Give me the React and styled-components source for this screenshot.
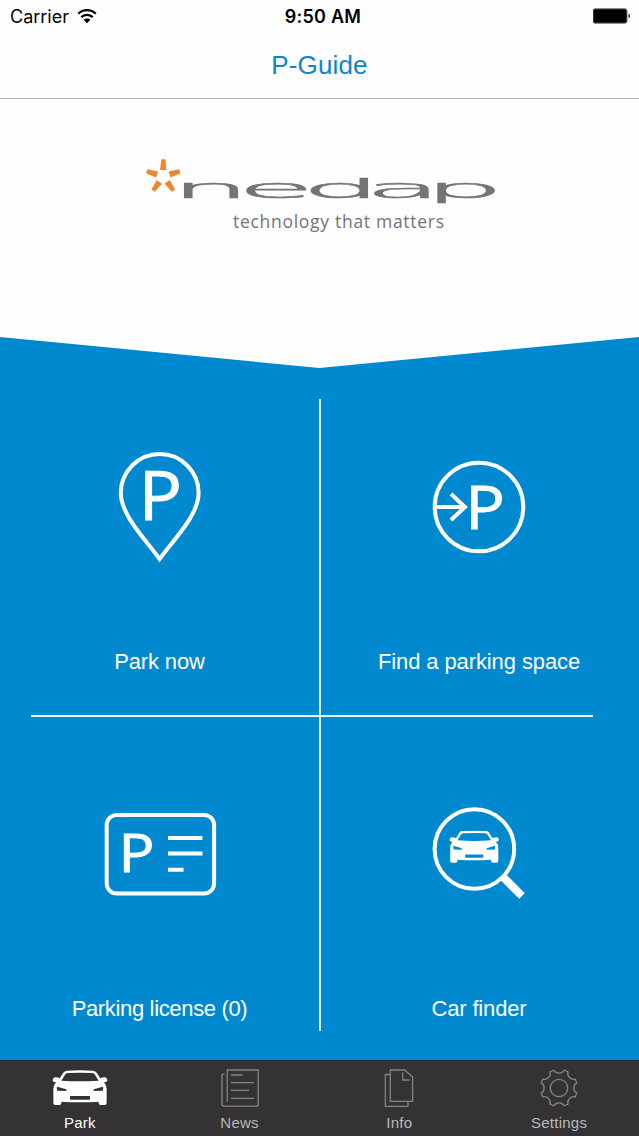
import styled, { createGlobalStyle } from "styled-components";

const tiles = [
  { id: "park", label: "Park now", Icon: PinIcon, spacing: -0.15 },
  { id: "find", label: "Find a parking space", Icon: FindIcon, spacing: -0.1 },
  { id: "license", label: "Parking license (0)", Icon: LicenseIcon, spacing: -0.34 },
  { id: "car", label: "Car finder", Icon: CarFinderIcon, spacing: -0.18 },
];

const tabs = [
  { id: "park", label: "Park", Icon: CarIcon },
  { id: "news", label: "News", Icon: NewsIcon },
  { id: "info", label: "Info", Icon: InfoIcon },
  { id: "settings", label: "Settings", Icon: GearIcon },
];

export default function App() {
  return (
    <>
      <GlobalStyle />
      <Screen>
        <StatusBar>
          <Carrier>
            Carrier
            <WifiIcon />
          </Carrier>
          <Clock>9:50 AM</Clock>
          <BatterySlot>
            <BatteryIcon />
          </BatterySlot>
        </StatusBar>
        <NavBar>
          <h1>P-Guide</h1>
        </NavBar>

        <Main>
          <Hero>
            <Logo />
          </Hero>
          <TileGrid>
            {tiles.slice(0, 2).map((tile, i) => (
              <Tile key={tile.id} tile={tile} column={i === 0 ? 1 : 3} row={1} />
            ))}
            <HorizontalLine />
            <VerticalLine />
            {tiles.slice(2).map((tile, i) => (
              <Tile key={tile.id} tile={tile} column={i === 0 ? 1 : 3} row={3} />
            ))}
          </TileGrid>
        </Main>

        <TabBar>
          {tabs.map(({ id, label, Icon }) => (
            <Tab key={id} $active={id === "park"}>
              <TabIcon>
                <Icon />
              </TabIcon>
              <span>{label}</span>
            </Tab>
          ))}
        </TabBar>
      </Screen>
    </>
  );
}

function Tile({ tile, column, row }) {
  const { label, Icon, spacing } = tile;

  return (
    <TileButton $column={column} $row={row} $spacing={spacing}>
      <Icon />
      <span>{label}</span>
    </TileButton>
  );
}

function WifiIcon() {
  return (
    <svg width="20" height="15" viewBox="0 0 20 15" fill="none" stroke="#000">
      <path d="M1.2 4.8a12.6 12.6 0 0 1 17.6 0" strokeWidth="2.3" />
      <path d="M4.3 8.2a8.2 8.2 0 0 1 11.4 0" strokeWidth="2.3" />
      <path d="M10 14.2L6.6 10.8a4.8 4.8 0 0 1 6.8 0z" fill="#000" stroke="none" />
    </svg>
  );
}

function BatteryIcon() {
  return (
    <svg width="38" height="16" viewBox="0 0 38 16">
      <rect x="0" y="0.8" width="34" height="14.4" rx="2" fill="#000" stroke="#777" />
      <path d="M35.6 5.5a3 3 0 0 1 0 5z" fill="#000" />
    </svg>
  );
}

function Logo() {
  return (
    <svg width="360" height="90" viewBox="140 150 360 90">
      <g fill="#f0852a">
        {[0, 72, 144, 216, 288].map((angle) => (
          <path
            key={angle}
            d="M161.3 159.2h4l1.2 10.8h-6.4z"
            transform={`rotate(${angle} 163.3 176.6)`}
          />
        ))}
      </g>
      <Wordmark x="-2.4 11.6 25.1 38.4 50.9" transform="translate(183 198) scale(4.75 1)">
        nedap
      </Wordmark>
      <Tagline x="233" y="227.5" textLength="211">
        technology that matters
      </Tagline>
    </svg>
  );
}

function PinIcon() {
  return (
    <TileSvg viewBox="0 0 120 120">
      <path d="M59.5 112C48 95 20.8 69 20.8 46A38.9 38.9 0 0 1 98.6 46C98.6 69 71.5 95 59.5 112z" />
      <Letter transform="translate(38.5 73.2) scale(1.08 1)" fontSize="67">P</Letter>
    </TileSvg>
  );
}

function FindIcon() {
  return (
    <TileSvg viewBox="0 0 120 120">
      <circle cx="60" cy="60" r="44.3" />
      <path d="M16 60H46M32 47L46 60L32 73" />
      <Letter transform="translate(46.2 82) scale(1.08 1)" fontSize="61">P</Letter>
    </TileSvg>
  );
}

function LicenseIcon() {
  return (
    <TileSvg viewBox="0 0 120 120">
      <rect x="6.7" y="21" width="107.4" height="78.5" rx="10" />
      <Letter transform="translate(18.5 77.7) scale(1.12 1)" fontSize="53.5">P</Letter>
      <path d="M68 44h34.5M68 59.5h34.5M68 75.7h15.5" />
    </TileSvg>
  );
}

function CarFinderIcon() {
  return (
    <TileSvg viewBox="0 0 120 120">
      <circle cx="55.4" cy="55" r="39.8" />
      <HandleLine d="M83 82L103 102" />
      <svg x="30" y="36.5" width="50.5" height="32.5" viewBox="156 61 168 106" preserveAspectRatio="none">
        <CarShape />
      </svg>
    </TileSvg>
  );
}

function CarShape() {
  return (
    <path
      fill="#fff"
      stroke="none"
      fillRule="evenodd"
      d="M200 63Q240 60 280 63Q287 64 290 69L301 86Q308 82 316 83Q323 86 322 93Q320 98 312 98Q320 106 320 118V160Q320 166 314 166H302Q296 166 296 160V156Q240 160 184 156V160Q184 166 178 166H166Q160 166 160 160V118Q160 106 168 98Q160 98 158 93Q157 86 164 83Q172 82 179 86L190 69Q193 64 200 63Z
         M203 70Q240 68 277 70Q282 71 284 74L296 93Q240 97 184 93L196 74Q198 71 203 70Z
         M171 111L196 118Q200 120 200 124L172 123Q169 116 171 111Z
         M309 111L284 118Q280 120 280 124L308 123Q311 116 309 111Z
         M210 139H270V150H210Z"
    />
  );
}

function CarIcon() {
  return (
    <svg width="56" height="35.3" viewBox="156 61 168 106">
      <CarShape />
    </svg>
  );
}

function NewsIcon() {
  return (
    <LineSvg viewBox="0 0 40 40">
      <path d="M7.2 33.7V2H38.3V36a2.2 2.2 0 0 1-2.2 2.2H4.2A2.2 2.2 0 0 1 2 36V6.3H4.5" />
      <path d="M11 7H22.7M11 14.7H34M11 22.4H29M11 30.4H34" />
    </LineSvg>
  );
}

function InfoIcon() {
  return (
    <LineSvg viewBox="0 0 40 40">
      <path d="M11.3 2H25.6L33.6 9V33.3H11.3z" />
      <path d="M23.7 4.5V12H30.5" />
      <path d="M11.3 6.5H6.3V38.3H29V33.3" />
    </LineSvg>
  );
}

function point(radius, degrees) {
  const angle = (degrees * Math.PI) / 180;
  return `${(20 + radius * Math.cos(angle)).toFixed(2)} ${(20 + radius * Math.sin(angle)).toFixed(2)}`;
}

function GearIcon() {
  // eight notches, one every 45 degrees
  const outline = [0, 45, 90, 135, 180, 225, 270, 315]
    .map((a) => `${point(18.5, a - 16)}C${point(14.2, a - 12)} ${point(14.2, a + 12)} ${point(18.5, a + 16)}`)
    .join("L");

  return (
    <LineSvg viewBox="0 0 40 40">
      <path d={`M${outline}z`} />
      <circle cx="20" cy="20" r="8.7" />
    </LineSvg>
  );
}

const GlobalStyle = createGlobalStyle`
  * {
    box-sizing: border-box;
  }

  body {
    margin: 0;
    background-color: #fefefe;
    font-family: "Liberation Sans", Arial, sans-serif;
  }

  h1 {
    margin: 0;
  }

  svg {
    display: block;
    flex-shrink: 0;
  }
`;

const Screen = styled.div`
  width: 639px;
  height: 1136px;
  display: flex;
  flex-direction: column;
  overflow: hidden;
`;

const StatusBar = styled.div`
  height: 32px;
  padding: 0 8px 0 10px;
  display: grid;
  grid-template-columns: 1fr auto 1fr;
  align-items: center;
  font-family: Inter, sans-serif;
  font-size: 18px;
  color: #000;
`;

const Carrier = styled.div`
  display: flex;
  align-items: center;
  gap: 8px;
`;

const Clock = styled.div`
  padding-left: 5px;
  font-weight: 600;
  letter-spacing: 0.25px;
`;

const BatterySlot = styled.div`
  justify-self: end;
`;

const NavBar = styled.header`
  height: 67px;
  border-bottom: 1px solid #b4b4b8;
  display: flex;
  align-items: center;
  justify-content: center;

  h1 {
    font-size: 26px;
    font-weight: 400;
    letter-spacing: 0.15px;
    color: #0c86c8;
  }
`;

const Main = styled.main`
  height: 962px;
  background-color: #0089cf;
`;

const Hero = styled.section`
  height: 269px;
  padding-top: 51px;
  display: flex;
  justify-content: center;
  align-items: flex-start;
  background-color: #fefefe;
  clip-path: polygon(0 0, 100% 0, 100% 238px, 50% 100%, 0 238px);
`;

const Wordmark = styled.text`
  font-family: "DejaVu Sans", sans-serif;
  font-weight: 200;
  font-size: 26px;
  fill: #737477;
  stroke: #737477;
  stroke-width: 2.2px;
  vector-effect: non-scaling-stroke;
`;

const Tagline = styled.text`
  font-family: "Open Sans", sans-serif;
  font-size: 17.5px;
  fill: #737477;
`;

const TileGrid = styled.section`
  display: grid;
  grid-template-columns: 319px 2px 318px;
  grid-template-rows: 347px 2px 344px;
`;

const TileButton = styled.a`
  grid-column: ${({ $column }) => $column};
  grid-row: ${({ $row }) => $row};
  padding-top: ${({ $row }) => ($row === 1 ? "79px" : "77px")};
  padding-right: ${({ $column }) => ($column === 1 ? "0" : "2px")};
  display: flex;
  flex-direction: column;
  align-items: center;
  gap: 82px;
  font-size: 22px;
  line-height: 26px;
  letter-spacing: ${({ $spacing }) => $spacing}px;
  color: #fff;
`;

const HorizontalLine = styled.div`
  grid-column: 1 / -1;
  grid-row: 2;
  margin: 0 46px 0 31px;
  background-color: #e4f6ff;
`;

const VerticalLine = styled.div`
  grid-column: 2;
  grid-row: 1 / -1;
  margin: 31px 0 30px;
  background-color: #d5efff;
`;

const TileSvg = styled.svg`
  width: 120px;
  height: 120px;
  fill: none;
  stroke: #fff;
  stroke-width: 4px;
`;

const HandleLine = styled.path`
  stroke-width: 8px;
`;

const Letter = styled.text`
  font-family: "Open Sans", "Noto Sans", sans-serif;
  letter-spacing: 0;
  fill: #fff;
  stroke: #fff;
  stroke-width: 0.9px;
`;

const TabBar = styled.nav`
  height: 75px;
  display: grid;
  grid-template-columns: repeat(4, 1fr);
  background-color: #343234;
  box-shadow: 0 -1px 0 #16303c;
`;

const Tab = styled.a`
  padding-top: 7px;
  display: flex;
  flex-direction: column;
  align-items: center;
  gap: 6px;
  font-size: 15px;
  line-height: 18px;
  letter-spacing: 0.25px;
  color: ${({ $active }) => ($active ? "#fff" : "#b9b9b9")};
`;

const TabIcon = styled.div`
  height: 40px;
  display: flex;
  align-items: center;
`;

const LineSvg = styled.svg`
  width: 40px;
  height: 40px;
  fill: none;
  stroke: #858585;
  stroke-width: 1.3px;
`;
